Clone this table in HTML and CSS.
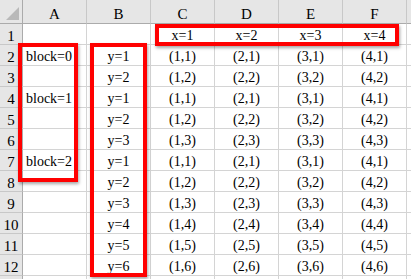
FILE: index.html
```html
<!DOCTYPE html>
<html>
<head>
<meta charset="utf-8">
<link rel="stylesheet" href="styles.css">
</head>
<body>
<div class="sheet">
  <div class="row hdr">
    <div class="rh corner"><span class="tri"></span></div>
    <div class="ch">A</div><div class="ch">B</div><div class="ch">C</div><div class="ch">D</div><div class="ch">E</div><div class="ch">F</div><div class="ch"></div>
  </div>
  <div class="row"><div class="rh">1</div><div class="cell"></div><div class="cell"></div><div class="cell">x=1</div><div class="cell">x=2</div><div class="cell">x=3</div><div class="cell">x=4</div><div class="cell"></div></div>
  <div class="row"><div class="rh">2</div><div class="cell l">block=0</div><div class="cell">y=1</div><div class="cell">(1,1)</div><div class="cell">(2,1)</div><div class="cell">(3,1)</div><div class="cell">(4,1)</div><div class="cell"></div></div>
  <div class="row"><div class="rh">3</div><div class="cell l"></div><div class="cell">y=2</div><div class="cell">(1,2)</div><div class="cell">(2,2)</div><div class="cell">(3,2)</div><div class="cell">(4,2)</div><div class="cell"></div></div>
  <div class="row"><div class="rh">4</div><div class="cell l">block=1</div><div class="cell">y=1</div><div class="cell">(1,1)</div><div class="cell">(2,1)</div><div class="cell">(3,1)</div><div class="cell">(4,1)</div><div class="cell"></div></div>
  <div class="row"><div class="rh">5</div><div class="cell l"></div><div class="cell">y=2</div><div class="cell">(1,2)</div><div class="cell">(2,2)</div><div class="cell">(3,2)</div><div class="cell">(4,2)</div><div class="cell"></div></div>
  <div class="row"><div class="rh">6</div><div class="cell l"></div><div class="cell">y=3</div><div class="cell">(1,3)</div><div class="cell">(2,3)</div><div class="cell">(3,3)</div><div class="cell">(4,3)</div><div class="cell"></div></div>
  <div class="row"><div class="rh">7</div><div class="cell l">block=2</div><div class="cell">y=1</div><div class="cell">(1,1)</div><div class="cell">(2,1)</div><div class="cell">(3,1)</div><div class="cell">(4,1)</div><div class="cell"></div></div>
  <div class="row"><div class="rh">8</div><div class="cell l"></div><div class="cell">y=2</div><div class="cell">(1,2)</div><div class="cell">(2,2)</div><div class="cell">(3,2)</div><div class="cell">(4,2)</div><div class="cell"></div></div>
  <div class="row"><div class="rh">9</div><div class="cell l"></div><div class="cell">y=3</div><div class="cell">(1,3)</div><div class="cell">(2,3)</div><div class="cell">(3,3)</div><div class="cell">(4,3)</div><div class="cell"></div></div>
  <div class="row"><div class="rh">10</div><div class="cell l"></div><div class="cell">y=4</div><div class="cell">(1,4)</div><div class="cell">(2,4)</div><div class="cell">(3,4)</div><div class="cell">(4,4)</div><div class="cell"></div></div>
  <div class="row"><div class="rh">11</div><div class="cell l"></div><div class="cell">y=5</div><div class="cell">(1,5)</div><div class="cell">(2,5)</div><div class="cell">(3,5)</div><div class="cell">(4,5)</div><div class="cell"></div></div>
  <div class="row"><div class="rh">12</div><div class="cell l"></div><div class="cell">y=6</div><div class="cell">(1,6)</div><div class="cell">(2,6)</div><div class="cell">(3,6)</div><div class="cell">(4,6)</div><div class="cell"></div></div>
  <div class="row"><div class="rh"></div><div class="cell"></div><div class="cell"></div><div class="cell"></div><div class="cell"></div><div class="cell"></div><div class="cell"></div><div class="cell"></div></div>
  <div class="mark mark-x"></div>
  <div class="mark mark-a"></div>
  <div class="mark mark-b"></div>
</div>
</body>
</html>
```

FILE: styles.css
```css
html, body {
  margin: 0;
  padding: 0;
  background: #ffffff;
}
.sheet {
  position: relative;
  width: 411px;
  height: 279px;
  overflow: hidden;
  font-family: "Liberation Serif", serif;
  color: #000;
}
.row {
  display: grid;
  grid-template-columns: 23px repeat(7, 64px);
  height: 21px;
}
.row.hdr {
  height: 24px;
}
.row > div {
  box-sizing: border-box;
  border-right: 1px solid #d4d4d4;
  border-bottom: 1px solid #d4d4d4;
  white-space: nowrap;
  display: flex;
  align-items: flex-end;
  justify-content: center;
}
.cell {
  font-size: 14px;
  line-height: 12px;
  padding-bottom: 2px;
}
.cell.l {
  justify-content: flex-start;
  padding-left: 3px;
}
.rh {
  background: #e6e6e6;
  font-size: 15px;
  line-height: 12px;
  padding-bottom: 2px;
  border-right-color: #ababab !important;
  border-bottom-color: #c8c8c8 !important;
}
.hdr > div {
  background: #e6e6e6;
  border-bottom-color: #ababab;
  border-right-color: #c8c8c8;
  align-items: center;
  font-size: 15px;
  line-height: 18px;
  padding-top: 5px;
  padding-bottom: 0;
}
.hdr > .corner {
  position: relative;
  border-bottom-color: #ababab !important;
}
.tri {
  position: absolute;
  right: 3px;
  bottom: 3px;
  width: 0;
  height: 0;
  border-left: 13px solid transparent;
  border-bottom: 13px solid #b9b9b9;
}
.mark {
  position: absolute;
  border: 4px solid #ff0000;
  box-shadow: 1px 2px 3px rgba(0,0,0,0.35);
}
.mark-x { left: 155px; top: 24px; width: 236px; height: 14px; }
.mark-a { left: 18px; top: 43px; width: 52px; height: 131px; }
.mark-b { left: 90px; top: 43px; width: 49px; height: 226px; }
```
